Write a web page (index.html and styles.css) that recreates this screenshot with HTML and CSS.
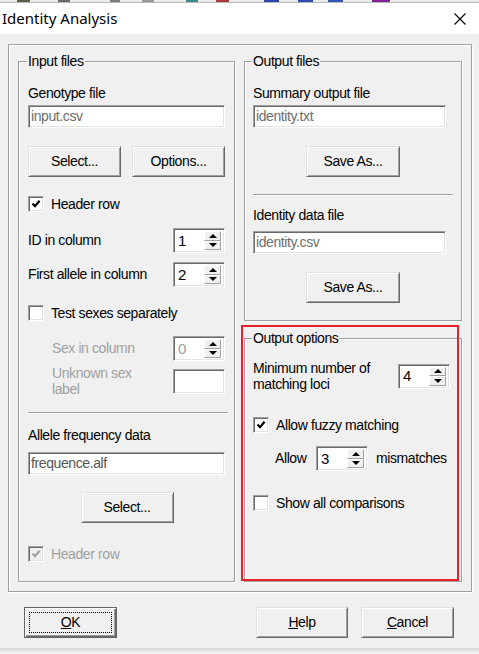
FILE: index.html
```html
<!DOCTYPE html>
<html>
<head>
<meta charset="utf-8">
<title>Identity Analysis</title>
<link rel="stylesheet" href="styles.css">
</head>
<body>
<div class="taskstrip"></div>
<div class="titlebar">
  <span class="title">Identity Analysis</span>
  <svg class="close" width="12" height="12" viewBox="0 0 12 12"><path d="M0.5 0.5 L11.5 11.5 M11.5 0.5 L0.5 11.5" stroke="#000" stroke-width="1.1" fill="none"/></svg>
</div>
<div class="dialog">
  <div class="frame">
    <div class="group group-input">
      <div class="gtitle">Input files</div>
      <div class="label mt17">Genotype file</div>
      <div class="edit mt4">input.csv</div>
      <div class="btnrow mt18">
        <div class="btn">Select...</div>
        <div class="btn">Options...</div>
      </div>
      <div class="check-row mt19">
        <span class="cb"><svg viewBox="0 0 10 10"><polyline points="1.5,4.5 4,7.2 8.6,1.8" fill="none" stroke="#000" stroke-width="2.2"/></svg></span>
        <span>Header row</span>
      </div>
      <div class="field-row mt16">
        <span>ID in column</span>
        <div class="spin"><span class="spin-val">1</span><span class="spin-btns"><span class="spin-btn"><i class="tri-up"></i></span><span class="spin-btn"><i class="tri-down"></i></span></span></div>
      </div>
      <div class="field-row mt9">
        <span>First allele in column</span>
        <div class="spin"><span class="spin-val">2</span><span class="spin-btns"><span class="spin-btn"><i class="tri-up"></i></span><span class="spin-btn"><i class="tri-down"></i></span></span></div>
      </div>
      <div class="check-row mt18">
        <span class="cb"></span>
        <span>Test sexes separately</span>
      </div>
      <div class="field-row mt15">
        <span class="indent disabled">Sex in column</span>
        <div class="spin"><span class="spin-val disabled">0</span><span class="spin-btns"><span class="spin-btn"><i class="tri-up"></i></span><span class="spin-btn"><i class="tri-down"></i></span></span></div>
      </div>
      <div class="field-row two-line mt4">
        <span class="indent disabled">Unknown sex<br>label</span>
        <div class="edit small"></div>
      </div>
      <div class="sep sep-left mt15"></div>
      <div class="label mt14">Allele frequency data</div>
      <div class="edit edit-dark mt9">frequence.alf</div>
      <div class="btn btn-center mt17">Select...</div>
      <div class="check-row mt23">
        <span class="cb cb-disabled"><svg viewBox="0 0 10 10"><polyline points="1.5,4.5 4,7.2 8.6,1.8" fill="none" stroke="#a0a0a0" stroke-width="2.2"/></svg></span>
        <span class="disabled">Header row</span>
      </div>
    </div>

    <div class="col-right">
      <div class="group group-out">
        <div class="gtitle">Output files</div>
        <div class="label mt17">Summary output file</div>
        <div class="edit edit-right mt4">identity.txt</div>
        <div class="btn btn-save mt18">Save As...</div>
        <div class="sep sep-right mt17"></div>
        <div class="label mt12">Identity data file</div>
        <div class="edit edit-right mt8">identity.csv</div>
        <div class="btn btn-save mt18">Save As...</div>
      </div>
      <div class="group group-opts">
        <div class="gtitle">Output options</div>
        <div class="field-row two-line opts-row mt14">
          <span>Minimum number of<br>matching loci</span>
          <div class="spin"><span class="spin-val">4</span><span class="spin-btns"><span class="spin-btn"><i class="tri-up"></i></span><span class="spin-btn"><i class="tri-down"></i></span></span></div>
        </div>
        <div class="check-row mt25">
          <span class="cb"><svg viewBox="0 0 10 10"><polyline points="1.5,4.5 4,7.2 8.6,1.8" fill="none" stroke="#000" stroke-width="2.2"/></svg></span>
          <span>Allow fuzzy matching</span>
        </div>
        <div class="allow-row mt13">
          <span class="allow-label">Allow</span>
          <div class="spin"><span class="spin-val">3</span><span class="spin-btns"><span class="spin-btn"><i class="tri-up"></i></span><span class="spin-btn"><i class="tri-down"></i></span></span></div>
          <span class="mism">mismatches</span>
        </div>
        <div class="check-row mt24">
          <span class="cb"></span>
          <span>Show all comparisons</span>
        </div>
      </div>
      <div class="redmark"></div>
    </div>
  </div>

  <div class="footer">
    <div class="btn btn-default"><span class="focus"><u>O</u>K</span></div>
    <div class="btn btn-help"><span><u>H</u>elp</span></div>
    <div class="btn btn-cancel"><span><u>C</u>ancel</span></div>
  </div>
</div>
<div class="bottom-edge"></div>
</body>
</html>
```

FILE: styles.css
```css
* { box-sizing: border-box; }

html, body {
  margin: 0;
  padding: 0;
}

body {
  width: 479px;
  height: 654px;
  overflow: hidden;
  background: #f0f0f0;
  font-family: "Liberation Sans", Arial, sans-serif;
  font-size: 14px;
  letter-spacing: -0.4px;
  line-height: 15px;
  color: #000;
}

.taskstrip {
  height: 3px;
  border-bottom: 1px solid #b8b8b8;
  background: linear-gradient(to right,
    #ececec 0 17px, #5b5b40 17px 30px, #ececec 30px 58px, #6b6b6b 58px 70px,
    #ececec 70px 110px, #7a7a7a 110px 120px, #ececec 120px 142px, #9a9a9a 142px 154px,
    #ececec 154px 186px, #3b8d8d 186px 198px, #ececec 198px 216px, #a83a3a 216px 229px,
    #ececec 229px 264px, #2a46a8 264px 279px, #ececec 279px 298px, #2c4cb2 298px 313px,
    #ececec 313px 328px, #3454b4 328px 343px, #ececec 343px 372px, #7a2494 372px 390px,
    #ececec 390px);
}

.titlebar {
  height: 31px;
  background: #fff;
  display: flex;
  align-items: center;
  justify-content: space-between;
  padding: 0 13px 0 2px;
}

.title {
  font-family: "Noto Sans", "Open Sans", sans-serif;
  font-size: 15px;
  letter-spacing: 0;
  color: #000;
}

.close { display: block; margin-top: 1px; }

.dialog {
  height: 614px;
  padding-top: 10px;
  background: #f0f0f0;
}

.frame {
  margin-left: 8px;
  width: 464px;
  border: 1px solid #a0a0a0;
  box-shadow: 1px 1px 0 #fff, inset 1px 1px 0 #fff;
  padding: 16px 9px 9px 9px;
  display: grid;
  grid-template-columns: 217px 218px;
  column-gap: 9px;
}

.group {
  border: 1px solid #a0a0a0;
  box-shadow: 1px 1px 0 #fff, inset 1px 1px 0 #fff;
  display: flex;
  flex-direction: column;
  align-items: flex-start;
}

.group-input { padding: 0 9px 19px 9px; }
.group-out { padding: 0 8px 17px 8px; }
.group-opts { padding: 0 11px 0 8px; flex: 1; }

.col-right {
  position: relative;
  display: flex;
  flex-direction: column;
  gap: 17px;
}

.gtitle {
  margin-top: -8px;
  margin-left: -1px;
  padding: 0 1px;
  background: #f0f0f0;
  height: 15px;
}

.mt4 { margin-top: 4px; }
.mt8 { margin-top: 8px; }
.mt9 { margin-top: 9px; }
.mt12 { margin-top: 12px; }
.mt13 { margin-top: 13px; }
.mt14 { margin-top: 14px; }
.mt15 { margin-top: 15px; }
.mt16 { margin-top: 16px; }
.mt17 { margin-top: 17px; }
.mt18 { margin-top: 18px; }
.mt19 { margin-top: 19px; }
.mt23 { margin-top: 23px; }
.mt24 { margin-top: 24px; }
.mt25 { margin-top: 25px; }

.label { height: 15px; }

.disabled { color: #a0a0a0; }

.edit {
  width: 197px;
  height: 23px;
  border: 1px solid;
  border-color: #a0a0a0 #fff #fff #a0a0a0;
  box-shadow: inset 1px 1px 0 #696969, inset -1px -1px 0 #e3e3e3;
  background: #fff;
  color: #6d6d6d;
  padding: 0 2px;
  display: flex;
  align-items: center;
}

.edit-dark { color: #555; }
.edit-right { width: 193px; }
.edit.small { width: 52px; height: 25px; }

.btn {
  height: 31px;
  width: 93px;
  display: flex;
  align-items: center;
  justify-content: center;
  border: 1px solid;
  border-color: #e3e3e3 #696969 #696969 #e3e3e3;
  box-shadow: inset 1px 1px 0 #fff, inset -1px -1px 0 #a0a0a0;
  background: #f0f0f0;
  padding-bottom: 1px;
}

.btnrow {
  width: 197px;
  display: flex;
  justify-content: space-between;
}

.btn-center { align-self: center; margin-left: 1px; }
.btn-save { margin-left: 53px; width: 94px; }

.check-row {
  display: flex;
  align-items: center;
  gap: 7px;
  height: 16px;
}

.cb {
  width: 16px;
  height: 16px;
  border: 1px solid;
  border-color: #a0a0a0 #fff #fff #a0a0a0;
  box-shadow: inset 1px 1px 0 #696969, inset -1px -1px 0 #e3e3e3;
  background: #fff;
  display: flex;
  align-items: center;
  justify-content: center;
}

.cb svg { width: 10px; height: 10px; display: block; }
.cb-disabled { background: #f0f0f0; }

.field-row {
  width: 197px;
  display: flex;
  align-items: center;
  justify-content: space-between;
  height: 25px;
}

.field-row.two-line {
  height: 32px;
  line-height: 16px;
}

.opts-row { width: 197px; }

.indent { padding-left: 24px; }

.spin {
  width: 52px;
  height: 25px;
  border: 1px solid;
  border-color: #a0a0a0 #fff #fff #a0a0a0;
  box-shadow: inset 1px 1px 0 #696969, inset -1px -1px 0 #e3e3e3;
  background: #fff;
  display: flex;
  padding: 2px 3px 2px 2px;
}

.spin-val {
  flex: 1;
  display: flex;
  align-items: center;
  padding-left: 2px;
  font-size: 15px;
}

.spin-btns {
  width: 17px;
  display: flex;
  flex-direction: column;
}

.spin-btn {
  flex: 1;
  display: flex;
  align-items: center;
  justify-content: center;
  background: #f0f0f0;
  border-right: 1px solid #a0a0a0;
  border-bottom: 1px solid #a0a0a0;
  border-top: 1px solid #fff;
  border-left: 1px solid #fff;
}

.tri-up {
  width: 0;
  height: 0;
  border-left: 4px solid transparent;
  border-right: 4px solid transparent;
  border-bottom: 4px solid #000;
}

.tri-down {
  width: 0;
  height: 0;
  border-left: 4px solid transparent;
  border-right: 4px solid transparent;
  border-top: 4px solid #000;
}

.sep {
  height: 2px;
  border-top: 1px solid #a0a0a0;
  border-bottom: 1px solid #fff;
}

.sep-left { width: 200px; }
.sep-right { width: 200px; }

.allow-row {
  display: flex;
  align-items: center;
  height: 25px;
}

.allow-label { margin-left: 22px; width: 41px; }
.mism { margin-left: 8px; }

.redmark {
  position: absolute;
  left: -3px;
  top: 264px;
  width: 218px;
  height: 256px;
  border: 2px solid #e8202b;
  pointer-events: none;
}

.footer {
  display: flex;
  margin-top: 15px;
  padding: 0 25px 0 24px;
}

.btn-default {
  width: 93px;
  border-color: #646464;
  box-shadow: inset 1px 1px 0 #fff, inset -1px -1px 0 #696969, inset -2px -2px 0 #a0a0a0;
  padding: 4px;
}

.focus {
  flex: 1;
  align-self: stretch;
  border: 1px dotted #000;
  display: flex;
  align-items: center;
  justify-content: center;
}

.btn-help { margin-left: auto; width: 92px; }
.btn-cancel { margin-left: 13px; width: 93px; }

.bottom-edge {
  height: 6px;
  background: linear-gradient(#d6d6d6, #f7f7f7);
}
```
